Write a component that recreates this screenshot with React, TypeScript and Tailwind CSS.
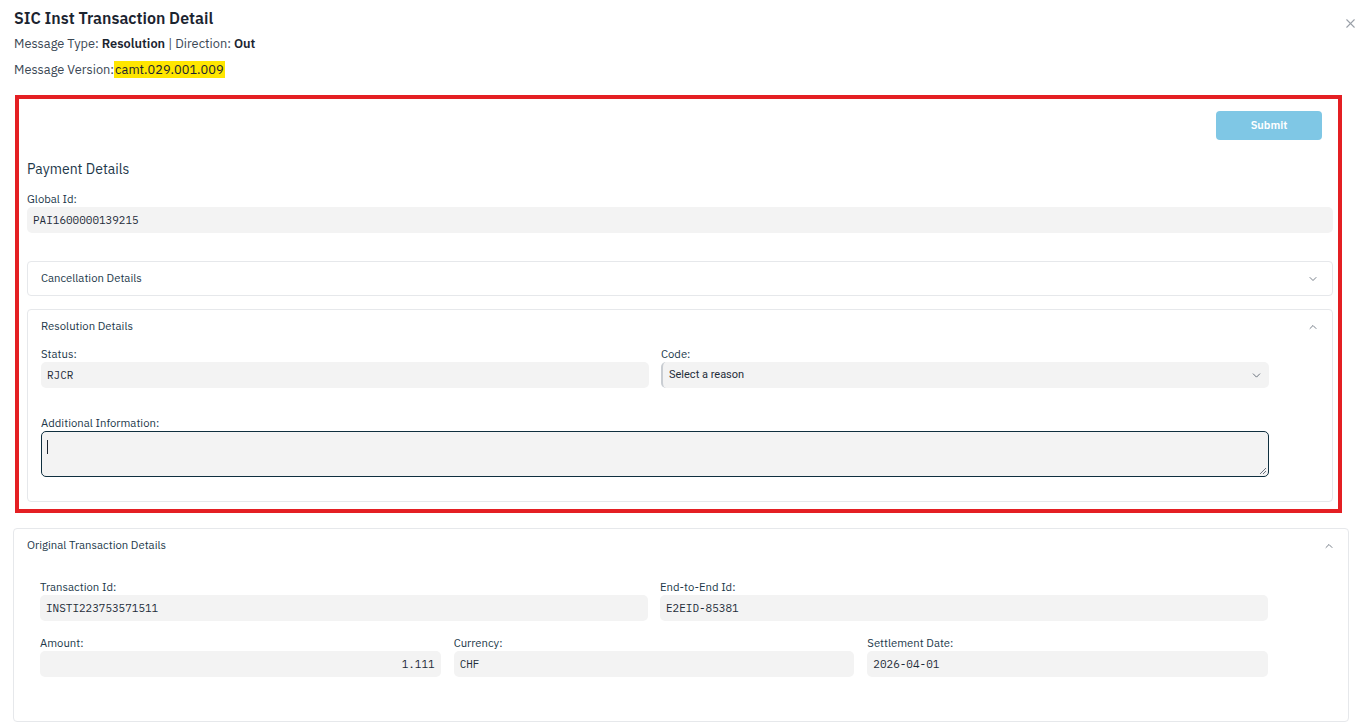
import React from "react";
import { ChevronDown, ChevronUp, X } from "lucide-react";

const sans = "font-['IBM_Plex_Sans','Roboto','Noto_Sans',sans-serif]";
const mono = "font-['IBM_Plex_Mono','DejaVu_Sans_Mono','Liberation_Mono',monospace]";

function Field({ label, value, right }: { label: string; value: string; right?: boolean }) {
  return (
    <div className="flex flex-col">
      <label className="text-[11.3px] leading-[14px] text-[#22384a] mb-[1px]">{label}</label>
      <div className={`h-[26px] rounded-[5px] bg-[#f3f3f3] px-[6px] flex items-center text-[11px] text-[#1f2d3a] ${mono} ${right ? "justify-end" : ""}`}>
        {value}
      </div>
    </div>
  );
}

function Section({ title, open, children }: { title: string; open?: boolean; children?: React.ReactNode }) {
  return (
    <div className="rounded-[4px] border border-[#e6e8eb] bg-white">
      <div className="flex items-center justify-between h-[33px] px-[13px]">
        <span className="text-[11.3px] text-[#22384a]">{title}</span>
        {open ? (
          <ChevronUp size={12} strokeWidth={1.5} className="text-[#4b5563]" />
        ) : (
          <ChevronDown size={12} strokeWidth={1.5} className="text-[#4b5563]" />
        )}
      </div>
      {children}
    </div>
  );
}

export default function App() {
  return (
    <div className={`min-h-[727px] w-[1362px] bg-white ${sans} text-[#1f2d3a]`}>
      <div className="relative px-[14px] pt-[8px]">
        <h1 className="text-[16px] font-semibold leading-[21px] text-[#1b2430]">SIC Inst Transaction Detail</h1>
        <button className="absolute right-[4px] top-[16px] text-[#9aa0a8]">
          <X size={15} strokeWidth={1.75} />
        </button>
        <p className="mt-[6px] text-[12.8px] leading-[17px] text-[#3b4754]">
          Message Type: <b className="font-semibold text-[#1b2430]">Resolution</b> | Direction: <b className="font-semibold text-[#1b2430]">Out</b>
        </p>
        <p className="mt-[9px] text-[12.8px] leading-[18px] text-[#3b4754]">
          Message Version:<span className="bg-[#ffe600] px-[1px] text-[#1b2430]">camt.029.001.009</span>
        </p>
      </div>

      <div className="ml-[15px] mt-[16px] w-[1327px] border-4 border-[#e41f23] pl-[8px] pr-[5px] pb-[7px]">
        <div className="flex justify-end pt-[12px] pr-[11px]">
          <button className="h-[29px] w-[106px] rounded-[4px] bg-[#7fc7e5] text-[11px] font-semibold text-white">Submit</button>
        </div>
        <h2 className="mt-[20px] text-[14px] leading-[18px] text-[#22384a]">Payment Details</h2>
        <div className="mt-[14px]">
          <Field label="Global Id:" value="PAI1600000139215" />
        </div>
        <div className="mt-[28px]">
          <Section title="Cancellation Details" />
        </div>
        <div className="mt-[13px]">
          <Section title="Resolution Details" open>
            <div className="px-[13px] pt-[4px] pb-[24px]">
              <div className="grid w-[1228px] grid-cols-2 gap-x-[12px]">
                <Field label="Status:" value="RJCR" />
                <div className="flex flex-col">
                  <label className="text-[11.3px] leading-[14px] text-[#22384a] mb-[1px]">Code:</label>
                  <div className="h-[26px] rounded-[5px] bg-[#f3f3f3] border-l-2 border-[#c9cdd2] pl-[6px] pr-[6px] flex items-center justify-between">
                    <span className="text-[11px] text-[#1f2d3a] font-['Liberation_Sans_Narrow','Roboto',sans-serif]">Select a reason</span>
                    <ChevronDown size={13} strokeWidth={1.5} className="text-[#4b5563]" />
                  </div>
                </div>
              </div>
              <div className="mt-[28px] w-[1228px]">
                <label className="block text-[11.3px] leading-[14px] text-[#22384a] mb-[1px]">Additional Information:</label>
                <div className="relative h-[46px] rounded-[5px] border border-[#0f2f3f] bg-[#f3f3f3]">
                  <span className="absolute left-[5px] top-[8px] h-[14px] w-[1px] bg-[#1b2430]" />
                  <svg className="absolute right-[1px] bottom-[1px]" width="8" height="8" viewBox="0 0 8 8">
                    <path d="M7 1 L1 7 M7 4 L4 7" stroke="#6b7280" strokeWidth="1" />
                  </svg>
                </div>
              </div>
            </div>
          </Section>
        </div>
      </div>

      <div className="mx-[13px] mt-[15px] mb-[5px]">
        <Section title="Original Transaction Details" open>
          <div className="px-[26px] pt-[18px] pb-[44px]">
            <div className="grid w-[1228px] grid-cols-2 gap-x-[12px]">
              <Field label="Transaction Id:" value="INSTI223753571511" />
              <Field label="End-to-End Id:" value="E2EID-85381" />
            </div>
            <div className="mt-[15px] grid w-[1228px] grid-cols-3 gap-x-[13px]">
              <Field label="Amount:" value="1.111" right />
              <Field label="Currency:" value="CHF" />
              <Field label="Settlement Date:" value="2026-04-01" />
            </div>
          </div>
        </Section>
      </div>
    </div>
  );
}
